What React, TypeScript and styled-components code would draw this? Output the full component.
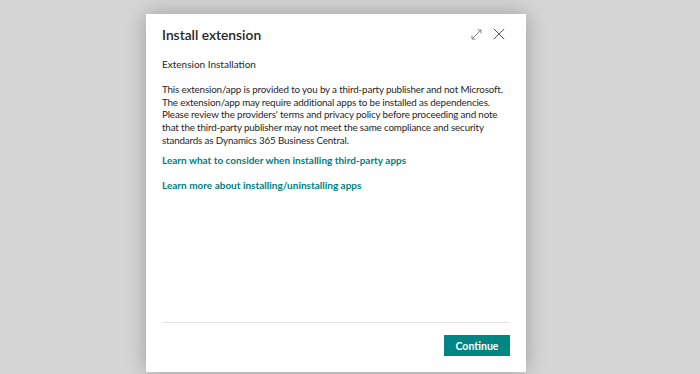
import React from "react";
import styled, { createGlobalStyle } from "styled-components";

const Global = createGlobalStyle`
  html, body { margin: 0; padding: 0; }
  body {
    background: #d6d6d6;
    font-family: "Lato", "Noto Sans", sans-serif;
    width: 700px;
    height: 374px;
    overflow: hidden;
  }
`;

const Page = styled.div`
  display: flex;
  justify-content: flex-start;
  padding: 14px 0 0 146px;
  height: 374px;
  box-sizing: border-box;
`;

const Dialog = styled.div`
  width: 380px;
  height: 358px;
  background: #ffffff;
  box-shadow: 0 0 20px rgba(0, 0, 0, 0.28);
  display: flex;
  flex-direction: column;
  box-sizing: border-box;
  padding: 0 16px;
`;

const Header = styled.div`
  display: flex;
  align-items: center;
  justify-content: space-between;
  height: 40px;
`;

const Title = styled.h1`
  margin: 0;
  font-size: 13.8px;
  font-weight: 600;
  color: #262626;
`;

const Actions = styled.div`
  display: flex;
  align-items: center;
  gap: 11px;
  margin-right: 5px;
`;

const IconButton = styled.button`
  border: none;
  background: none;
  padding: 0;
  width: 12px;
  height: 12px;
  display: flex;
  align-items: center;
  justify-content: center;
`;

const Body = styled.div`
  flex: 1;
  display: flex;
  flex-direction: column;
  padding-top: 4px;
`;

const Subtitle = styled.div`
  font-size: 10px;
  color: #262626;
  line-height: 13px;
`;

const Paragraph = styled.p`
  margin: 12px 0 0;
  font-size: 9.8px;
  line-height: 12.7px;
  letter-spacing: -0.15px;
  white-space: nowrap;
  color: #262626;
`;

const Link = styled.a<{ $gap: number }>`
  display: block;
  font-size: 10px;
  font-weight: 700;
  color: #00807d;
  text-decoration: none;
  line-height: 13px;
  margin-top: ${(p) => p.$gap}px;
`;

const Footer = styled.div`
  border-top: 1px solid #e3e3e3;
  display: flex;
  justify-content: flex-end;
  padding: 12px 0 16px;
`;

const PrimaryButton = styled.button`
  background: #008585;
  color: #ffffff;
  border: none;
  font-family: inherit;
  font-size: 10.5px;
  font-weight: 700;
  width: 66px;
  height: 21px;
  padding: 0;
`;

const lines = [
  "This extension/app is provided to you by a third-party publisher and not Microsoft.",
  "The extension/app may require additional apps to be installed as dependencies.",
  "Please review the providers' terms and privacy policy before proceeding and note",
  "that the third-party publisher may not meet the same compliance and security",
  "standards as Dynamics 365 Business Central.",
];

export default function App() {
  return (
    <>
      <Global />
      <Page>
        <Dialog>
          <Header>
            <Title>Install extension</Title>
            <Actions>
              <IconButton aria-label="Expand">
                <svg width="11" height="11" viewBox="0 0 11 11" fill="none" stroke="#777" strokeWidth="0.9">
                  <path d="M1 10 L10 1" />
                  <path d="M6.5 1 H10 V4.5" />
                  <path d="M1 6.5 V10 H4.5" />
                </svg>
              </IconButton>
              <IconButton aria-label="Close">
                <svg width="12" height="12" viewBox="0 0 12 12" fill="none" stroke="#555" strokeWidth="1">
                  <path d="M0.8 0.8 L11.2 11.2 M11.2 0.8 L0.8 11.2" />
                </svg>
              </IconButton>
            </Actions>
          </Header>
          <Body>
            <Subtitle>Extension Installation</Subtitle>
            <Paragraph>
              {lines.map((l, i) => (
                <React.Fragment key={i}>
                  {l}
                  {i < lines.length - 1 && <br />}
                </React.Fragment>
              ))}
            </Paragraph>
            <Link href="#" $gap={7}>Learn what to consider when installing third-party apps</Link>
            <Link href="#" $gap={12}>Learn more about installing/uninstalling apps</Link>
          </Body>
          <Footer>
            <PrimaryButton>Continue</PrimaryButton>
          </Footer>
        </Dialog>
      </Page>
    </>
  );
}
